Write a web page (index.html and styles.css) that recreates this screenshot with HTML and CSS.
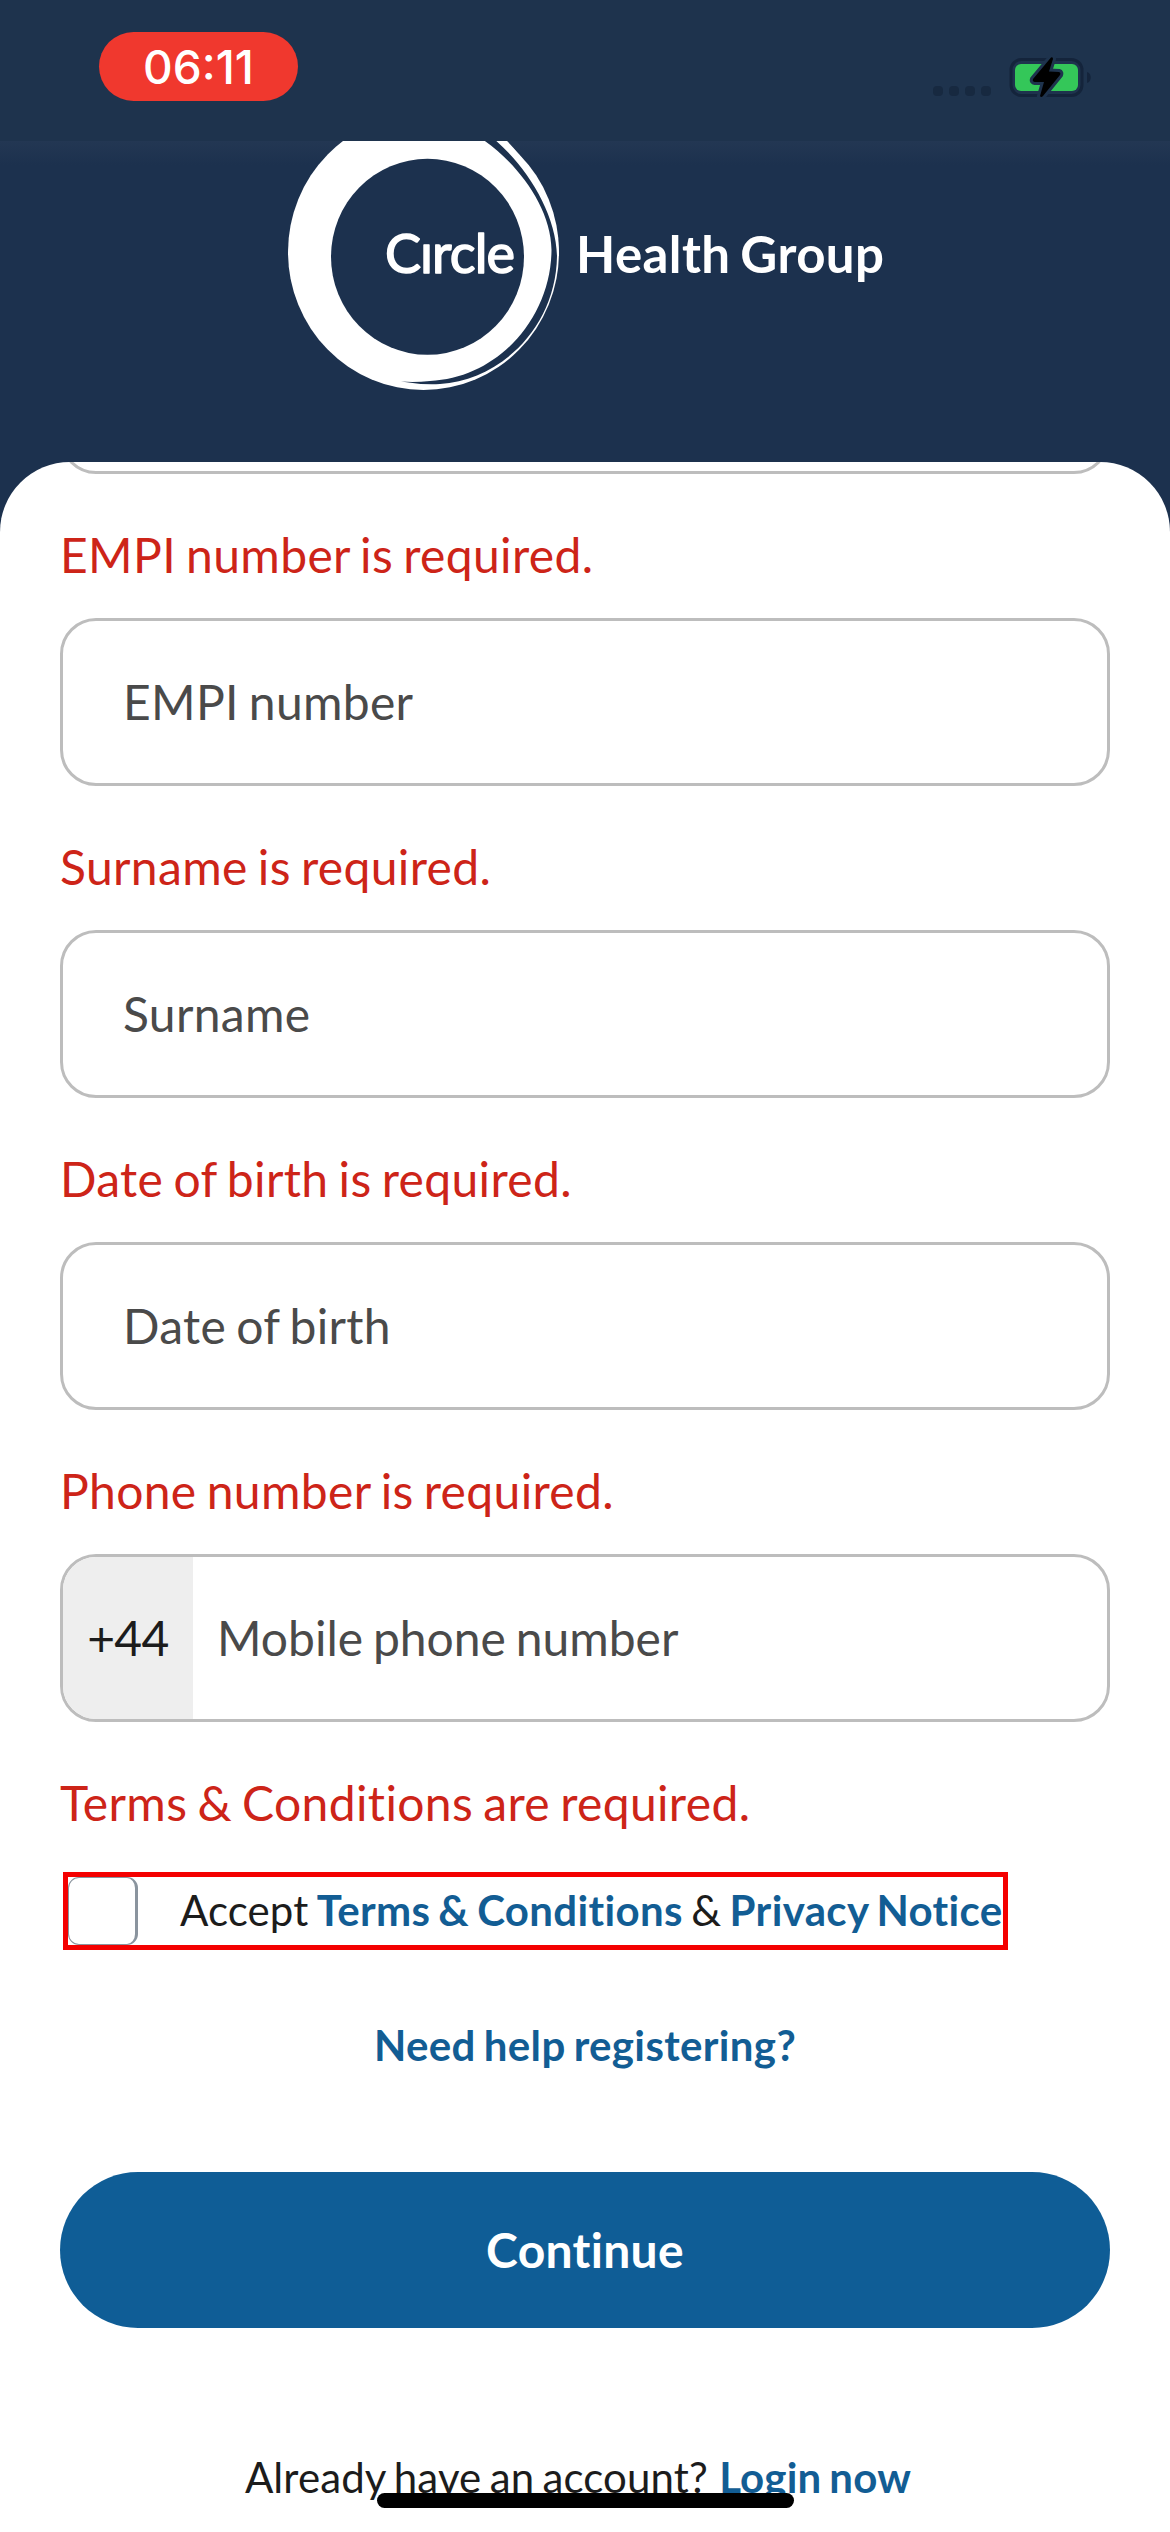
FILE: index.html
```html
<!DOCTYPE html>
<html lang="en">
<head>
<meta charset="utf-8">
<title>Circle Health Group – Register</title>
<link rel="stylesheet" href="styles.css">
</head>
<body>
<div class="screen">
  <div class="status">
    <span class="clock">06:11</span>
    <svg class="status-icons" width="160" height="44" viewBox="932 56 160 44">
      <g fill="#172940"><rect x="933" y="86" width="10" height="10" rx="4"/><rect x="949" y="86" width="10" height="10" rx="4"/><rect x="965" y="86" width="10" height="10" rx="4"/><rect x="981" y="86" width="10" height="10" rx="4"/></g>
      <rect x="1011" y="59.500" width="71" height="36" rx="10.500" fill="none" stroke="#14243b" stroke-width="3"/>
      <path d="M1087 72c5 1 5 10 0 11z" fill="#14243b"/>
      <rect x="1015" y="64" width="63" height="27" rx="6" fill="#34c759"/>
      <path d="M1051 57.500L1033 79Q1032 81.500 1035 82L1044 82L1040 96Q1041 98 1043 96L1060 75Q1061 72.500 1059 72L1049 71.500L1053 59Q1053 56.500 1051 57.500Z" fill="#000" stroke="#1e334d" stroke-width="6" paint-order="stroke"/>
    </svg>
  </div>
  <header class="header">
    <svg class="logo" width="610" height="321" viewBox="280 141 610 321">
      <ellipse cx="423.500" cy="252" rx="135.500" ry="138" fill="#fff"/>
      <path d="M494 139C526 166 556 212 557 256L559 256C559 212 536 168 500 134Z" fill="#fff"/>
      <ellipse cx="427.500" cy="256.800" rx="96.500" ry="98" fill="#1c314e"/>
      <path d="M482 139C516 162 551 206 551.500 250C551 318 498 378 430 381Q415 382.500 401 381.500Q422 385 440 384C500 380 556 328 557 256C556 212 526 166 494 139Z" fill="#1c314e"/>
      <text class="logo-circle" x="385" y="273" textLength="130">Cırcle</text>
      <text class="logo-group" x="576" y="273" textLength="308">Health Group</text>
    </svg>
  </header>
  <main class="panel">
    <div class="field field-cut"></div>
    <p class="error">EMPI number is required.</p>
    <div class="field">EMPI number</div>
    <p class="error">Surname is required.</p>
    <div class="field">Surname</div>
    <p class="error">Date of birth is required.</p>
    <div class="field">Date of birth</div>
    <p class="error">Phone number is required.</p>
    <div class="field field-phone"><span class="prefix">+44</span><span>Mobile phone number</span></div>
    <p class="error">Terms &amp; Conditions are required.</p>
    <div class="terms">
      <span class="checkbox"></span>
      <span class="terms-text">Accept <a>Terms &amp; Conditions</a> &amp; <a>Privacy Notice</a></span>
    </div>
    <a class="help">Need help registering?</a>
    <div class="button">Continue</div>
    <p class="login">Already have an account? <a>Login now</a></p>
  </main>
  <div class="home-indicator"></div>
</div>
</body>
</html>
```
FILE: styles.css
```css
* { box-sizing: border-box; }
body { margin: 0; }
.screen {
  position: relative;
  width: 1170px;
  height: 2532px;
  overflow: hidden;
  display: flex;
  flex-direction: column;
  background: #1c314e;
  font-family: Lato, sans-serif;
  font-variant-ligatures: none;
  color: #1c1c1c;
}
.status {
  height: 141px;
  flex: none;
  padding: 32px 78px 0 99px;
  display: flex;
  justify-content: space-between;
  align-items: flex-start;
  background: #1e334d;
}
.clock {
  width: 199px;
  height: 69px;
  border-radius: 35px;
  background: #f0382e;
  color: #fff;
  font: 500 46px/71px Inter, sans-serif;
  text-align: center;
}
.status-icons { margin-top: 24px; }
.header {
  height: 321px;
  flex: none;
  display: flex;
  padding-left: 280px;
  background: linear-gradient(#233753, #1c314e 24px);
}
.logo text { fill: #fff; font-family: Lato, sans-serif; }
.logo-circle { font-size: 54px; stroke: #fff; stroke-width: 1.5px; stroke-linejoin: round; }
.logo-group { font-size: 51px; font-weight: 700; word-spacing: -3px; }
.panel {
  flex: 1;
  display: flex;
  flex-direction: column;
  padding: 0 60px;
  background: #fff;
  border-radius: 70px 70px 0 0;
  overflow: hidden;
  word-spacing: -2.5px;
  letter-spacing: 0.1px;
}
.field {
  flex: none;
  height: 168px;
  border: 3px solid #bdbdbd;
  border-radius: 36px;
  padding-left: 60px;
  display: flex;
  align-items: center;
  font-size: 48px;
  line-height: 58px;
  letter-spacing: 0.3px;
  color: #4a4a4a;
  overflow: hidden;
}
.field-cut { margin-top: -156px; }
.field-phone { padding-left: 0; gap: 24px; letter-spacing: 0; }
.prefix {
  width: 130px;
  height: 162px;
  line-height: 162px;
  letter-spacing: -0.6px;
  text-align: center;
  background: #eee;
  color: #1c1c1c;
}
.error {
  flex: none;
  margin: 0;
  height: 144px;
  padding-top: 52px;
  font-size: 48px;
  line-height: 58px;
  letter-spacing: 0.35px;
  color: #cd2418;
}
.terms {
  flex: none;
  align-self: flex-start;
  width: 945px;
  height: 78px;
  margin: 6px 0 0 3px;
  border: 5px solid #f40000;
  display: flex;
  align-items: center;
  font-size: 42px;
  line-height: 50px;
  white-space: nowrap;
}
.terms-text { margin-top: -2px; }
.terms-text a { letter-spacing: 0.35px; }
.checkbox {
  flex: none;
  width: 70px;
  height: 68px;
  margin-right: 42px;
  border: 3px solid #8a949e;
  border-left-width: 1px;
  border-top-width: 1px;
  border-bottom-width: 1px;
  border-radius: 11px;
}
a { color: #125d94; font-weight: 700; }
.help {
  margin-top: 70px;
  font-size: 42px;
  line-height: 50px;
  letter-spacing: 0.35px;
  text-align: center;
}
.button {
  flex: none;
  height: 156px;
  margin-top: 102px;
  border-radius: 78px;
  background: #0f5d96;
  color: #fff;
  font-size: 48px;
  font-weight: 700;
  line-height: 156px;
  letter-spacing: 0.3px;
  text-align: center;
}
.login {
  margin: 124px 0 0;
  padding-right: 14px;
  font-size: 42px;
  line-height: 50px;
  text-align: center;
}
.login a { margin-left: 3px; letter-spacing: 0.2px; }
.home-indicator {
  position: absolute;
  left: 377px;
  top: 2493px;
  width: 417px;
  height: 15px;
  border-radius: 8px;
  background: #000;
}
```
